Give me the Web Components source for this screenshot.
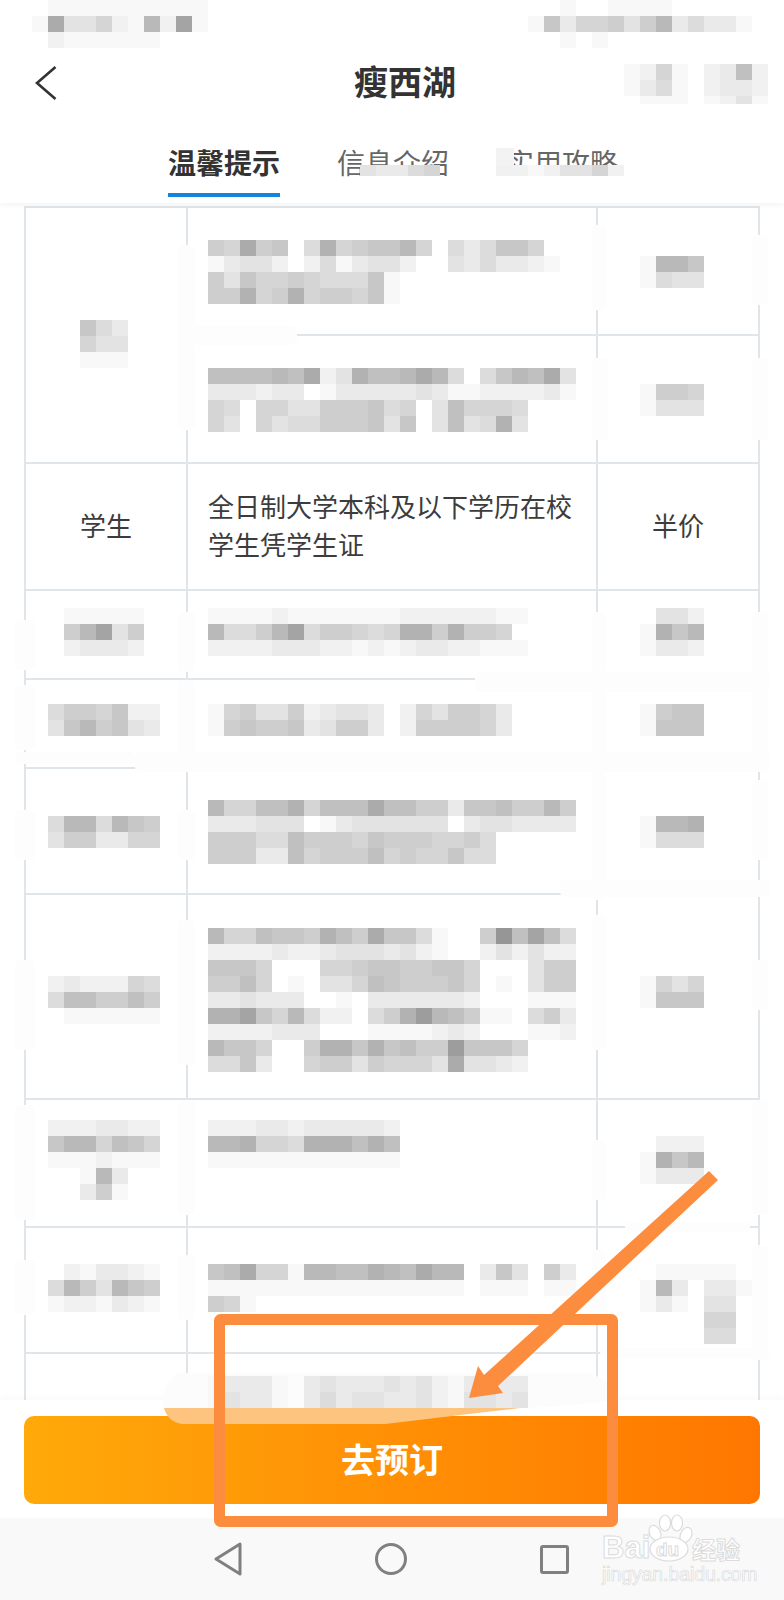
<!DOCTYPE html>
<html lang="zh">
<head>
<meta charset="utf-8">
<title>瘦西湖</title>
<style>
	html, body { margin: 0; background: #fff; }
	body { font-family: "Noto Sans CJK SC", "Noto Sans", sans-serif; color: #333; }
</style>
</head>
<body>
<phone-screen>
	<top-header>
		<pix-block slot="status" rows="
			.1111111111.
			1c44621a2d1
			.2111111...
		"></pix-block>
		<pix-block slot="status" rows="
			..1..1111.....
			18366747a35331
			..1.1.........
		"></pix-block>
		<span slot="title">瘦西湖</span>
		<pix-block slot="action" style="height:40px" rows="
			1261.2392
			1351.2332
			.111.1241
		"></pix-block>
		<tab-item slot="tabs" active>温馨提示</tab-item>
		<tab-item slot="tabs">信息介绍</tab-item>
		<tab-item slot="tabs">实用攻略</tab-item>
	</top-header>

	<fare-table>
		<fare-cell col="1" span style="--top:112px"><pix-block rows="..853 ..644 ..111"></pix-block></fare-cell>
		<fare-cell col="2" style="--top:32px"><pix-block rows="
			76c78.5b6788a6.535886
			13442.2513442..4353321
			748667655581
			77b67b677681
		"></pix-block></fare-cell>
		<fare-cell col="3" style="--top:48px"><pix-block rows="1aa8 1544"></pix-block></fare-cell>
		<fare-cell col="2" style="--top:32px"><pix-block rows="
			9999a9c24b99aca5.58a9c4
			333233.1333334311222231
			65.6644777856.496665
			64.6455777848.4945b4
		"></pix-block></fare-cell>
		<fare-cell col="3" style="--top:48px"><pix-block rows="1776 1444"></pix-block></fare-cell>

		<fare-cell text>学生</fare-cell>
		<fare-cell text col="2">全日制大学本科及以下学历在校学生凭学生证</fare-cell>
		<fare-cell text>半价</fare-cell>

		<fare-cell col="1" style="--top:17px"><pix-block rows=".11111 .7ad47 .23332"></pix-block></fare-cell>
		<fare-cell col="2" style="--top:17px"><pix-block rows="
			11112111111122222211
			a557ad577656bb7b776
			22223332212123322111
		"></pix-block></fare-cell>
		<fare-cell col="3" style="--top:17px"><pix-block rows=".442 1b8a 1332"></pix-block></fare-cell>

		<fare-cell col="1" style="--top:24px"><pix-block rows="5776822 48a7843"></pix-block></fare-cell>
		<fare-cell col="2" style="--top:24px"><pix-block rows="
			16744723443.2647763
			17877834773.2777763
		"></pix-block></fare-cell>
		<fare-cell col="3" style="--top:24px"><pix-block rows="1788 1888"></pix-block></fare-cell>

		<fare-cell col="1" style="--top:47px"><pix-block rows="5aa5a87 4773366"></pix-block></fare-cell>
		<fare-cell col="2" style="--top:31px"><pix-block rows="
			a6699b6999c9977388977a7
			333444.13444444.3443333
			777559777687776675
			777339677796766855
		"></pix-block></fare-cell>
		<fare-cell col="3" style="--top:47px"><pix-block rows="1aab 1555"></pix-block></fare-cell>

		<fare-cell col="1" style="--top:81px"><pix-block rows="2322265 5997797 .111111"></pix-block></fare-cell>
		<fare-cell col="2" style="--top:33px"><pix-block rows="
			a669887b97c8851..7f9d95
			222232234443421..242422
			8886...6678877886...477
			7796.1.4469877786.1.477
			334333..1.3333332...111
			bbd86a522.57bea9711.573
			2222333...1111232...112
			a886..7bb8b8977e8886
			5583..677476664c4432
		"></pix-block></fare-cell>
		<fare-cell col="3" style="--top:81px"><pix-block rows="1646 1888"></pix-block></fare-cell>

		<fare-cell col="1" style="--top:20px"><pix-block rows="2223322 8aa6986 1112111 ..1a3 ..371"></pix-block></fare-cell>
		<fare-cell col="2" style="--top:20px"><pix-block rows="
			222332333332
			aab665bbb9b9
			111111111111
		"></pix-block></fare-cell>
		<fare-cell col="3" style="--top:36px"><pix-block rows=".222 1b8a 1333"></pix-block></fare-cell>

		<fare-cell col="1" style="--top:36px"><pix-block rows=".213321 5a74a87 1221321"></pix-block></fare-cell>
		<fare-cell col="2" style="--top:36px"><pix-block rows="
			89c661aa99ba9caa.384.73
			1111111111111111.111.11
			761
		"></pix-block></fare-cell>
		<fare-cell col="3" style="--top:36px"><pix-block rows=".11111 1a3.331 131.44 ....66 ....55"></pix-block></fare-cell>

		<fare-cell col="1"></fare-cell>
		<fare-cell col="2"></fare-cell>
		<fare-cell col="3"></fare-cell>
	</fare-table>

	<book-bar>去预订</book-bar>
	<nav-keys></nav-keys>
	<mark-layer></mark-layer>
</phone-screen>

<script>
	const tpl = html => {
		const t = document.createElement('template');
		t.innerHTML = html;
		return t;
	};

	const screenTpl = tpl(`
		<style>
			:host {
				display: flex;
				flex-direction: column;
				position: relative;
				width: 784px;
				height: 1600px;
				overflow: hidden;
				background: #fff;
			}
		</style>
		<slot></slot>
	`);

	customElements.define('phone-screen', class extends HTMLElement {
		constructor() {
			super();
			this.attachShadow({ mode: 'open' }).appendChild(screenTpl.content.cloneNode(true));
		}
	});

	//	mosaic squares, 16px each; one hex digit per square is how dark it is, '.' is nothing
	customElements.define('pix-block', class extends HTMLElement {
		constructor() {
			super();
			this.attachShadow({ mode: 'open' });
		}

		connectedCallback() {
			const rows = (this.getAttribute('rows') || '').trim().split(/\s+/);
			const width = Math.max(...rows.map(r => r.length));
			let cells = '';
			rows.forEach(r => {
				for (let i = 0; i < width; i++) {
					const c = r[i];
					if (!c || c === '.') {
						cells += '<i></i>';
					} else {
						const g = 255 - parseInt(c, 16) * 7;
						cells += `<i style="background:rgb(${g},${g},${g})"></i>`;
					}
				}
			});
			this.shadowRoot.innerHTML = `
				<style>
					:host { display: grid; grid-template-columns: repeat(${width}, 16px); grid-auto-rows: 16px; overflow: hidden; flex: none; }
					i { display: block; }
				</style>
				${cells}
			`;
		}
	});

	const headerTpl = tpl(`
		<style>
			:host {
				display: block;
				position: relative;
				z-index: 2;
				flex: none;
				height: 203px;
				background: #fff;
				box-shadow: 0 2px 6px rgba(0, 0, 0, .05);
			}
			.status {
				display: flex;
				justify-content: space-between;
				height: 48px;
				padding: 0 32px;
			}
			.title {
				display: flex;
				height: 68px;
				align-items: center;
				padding: 0 16px 0 35px;
			}
			.title svg { flex: none; margin-top: 2px; }
			.name {
				margin-left: 297px;
				font-size: 34px;
				font-weight: 700;
				line-height: 44px;
				margin-top: -3px;
				color: #333;
			}
			.action { margin-left: auto; padding-top: 16px; align-self: flex-start; }
			.tabs {
				display: flex;
				gap: 57px;
				margin-top: 24px;
				padding-left: 168px;
			}
		</style>
		<div class="status"><slot name="status"></slot></div>
		<div class="title">
			<svg width="22" height="34" viewBox="0 0 22 34"><path d="M20.5 1 L2 17 L20.5 33" fill="none" stroke="#333" stroke-width="2.6"/></svg>
			<div class="name"><slot name="title"></slot></div>
			<div class="action"><slot name="action"></slot></div>
		</div>
		<div class="tabs"><slot name="tabs"></slot></div>
	`);

	customElements.define('top-header', class extends HTMLElement {
		constructor() {
			super();
			this.attachShadow({ mode: 'open' }).appendChild(headerTpl.content.cloneNode(true));
		}
	});

	const tabTpl = tpl(`
		<style>
			:host {
				display: block;
				font-size: 28px;
				line-height: 44px;
				color: #666;
				padding-bottom: 9px;
				border-bottom: 4px solid transparent;
			}
			:host([active]) {
				font-weight: 700;
				color: #333;
				border-bottom-color: #1584dc;
			}
		</style>
		<slot></slot>
	`);

	customElements.define('tab-item', class extends HTMLElement {
		constructor() {
			super();
			this.attachShadow({ mode: 'open' }).appendChild(tabTpl.content.cloneNode(true));
		}
	});

	const tableTpl = tpl(`
		<style>
			:host {
				display: block;
				flex: 1;
				min-height: 0;
				overflow: hidden;
				padding: 3px 24px 0;
			}
			.grid {
				display: grid;
				grid-template-columns: 162px 410px 162px;
				grid-template-rows: 128px 128px 127px 89px 89px 126px 205px 128px 126px 128px;
				border-top: 2px solid #e0e5ea;
				border-left: 2px solid #e0e5ea;
			}
		</style>
		<div class="grid"><slot></slot></div>
	`);

	customElements.define('fare-table', class extends HTMLElement {
		constructor() {
			super();
			this.attachShadow({ mode: 'open' }).appendChild(tableTpl.content.cloneNode(true));
		}
	});

	const cellTpl = tpl(`
		<style>
			:host {
				display: flex;
				box-sizing: border-box;
				border-right: 2px solid #e0e5ea;
				border-bottom: 2px solid #e0e5ea;
				padding-top: var(--top, 0);
				min-width: 0;
			}
			:host([span]) { grid-row: span 2; }
			:host([col="1"]) { padding-left: 22px; }
			:host([col="2"]) { padding-left: 20px; }
			:host([col="3"]) { padding-left: 42px; }
			:host([text]) {
				align-items: center;
				justify-content: center;
				padding-bottom: 4px;
				font-size: 26px;
				line-height: 38px;
				color: #3c3c3c;
			}
			:host([text][col="2"]) {
				justify-content: flex-start;
				padding-right: 20px;
			}
		</style>
		<slot></slot>
	`);

	customElements.define('fare-cell', class extends HTMLElement {
		constructor() {
			super();
			this.attachShadow({ mode: 'open' }).appendChild(cellTpl.content.cloneNode(true));
		}
	});

	const bookTpl = tpl(`
		<style>
			:host {
				display: block;
				flex: none;
				position: relative;
				z-index: 1;
				box-sizing: border-box;
				height: 118px;
				padding: 16px 24px 14px;
				background: #fff;
				box-shadow: 0 -3px 6px rgba(0, 0, 0, .025);
			}
			.btn {
				display: flex;
				align-items: center;
				justify-content: center;
				height: 88px;
				padding-bottom: 4px;
				box-sizing: border-box;
				border-radius: 10px;
				background: linear-gradient(90deg, #ffa90a, #ff7700);
				color: #fff;
				font-size: 34px;
				font-weight: 700;
			}
		</style>
		<div class="btn"><slot></slot></div>
	`);

	customElements.define('book-bar', class extends HTMLElement {
		constructor() {
			super();
			this.attachShadow({ mode: 'open' }).appendChild(bookTpl.content.cloneNode(true));
		}
	});

	const navTpl = tpl(`
		<style>
			:host {
				display: flex;
				flex: none;
				position: relative;
				z-index: 1;
				align-items: center;
				gap: 133px;
				height: 82px;
				padding-left: 214px;
				background: #f9f9f9;
			}
			svg { display: block; fill: none; stroke: #808080; stroke-width: 3; stroke-linejoin: round; }
		</style>
		<svg width="28" height="34" viewBox="0 0 28 34"><path d="M26 2 V32 L2 17 Z"/></svg>
		<svg width="32" height="32" viewBox="0 0 32 32"><circle cx="16" cy="16" r="14.5"/></svg>
		<svg width="29" height="29" viewBox="0 0 29 29"><rect x="1.5" y="1.5" width="26" height="26" rx="1.5"/></svg>
	`);

	customElements.define('nav-keys', class extends HTMLElement {
		constructor() {
			super();
			this.attachShadow({ mode: 'open' }).appendChild(navTpl.content.cloneNode(true));
		}
	});

	//	retouch patches that hide table lines: x, y, w, h
	const PATCHES = [
		[178, 245, 17, 185], [592, 225, 14, 85], [752, 235, 16, 70], [188, 325, 109, 20],
		[592, 358, 16, 82], [752, 358, 16, 82],
		[15, 620, 20, 50], [178, 612, 17, 60], [592, 612, 14, 60], [752, 612, 16, 60],
		[475, 672, 295, 20], [15, 685, 20, 65], [178, 680, 17, 90], [592, 680, 14, 90], [752, 680, 16, 90],
		[135, 752, 635, 20], [15, 752, 120, 12],
		[15, 810, 20, 50], [178, 810, 17, 50], [592, 772, 14, 128], [752, 780, 16, 80], [560, 880, 210, 17],
		[15, 960, 20, 90], [178, 920, 17, 145], [592, 915, 14, 135], [752, 960, 16, 50],
		[15, 1105, 20, 115], [178, 1100, 17, 115], [592, 1140, 14, 60], [752, 1100, 16, 115], [625, 1222, 125, 10],
		[15, 1260, 20, 55], [178, 1255, 17, 65], [592, 1250, 14, 70], [752, 1245, 16, 115], [600, 1348, 170, 10]
	];

	const markTpl = tpl(`
		<style>
			:host {
				position: absolute;
				left: 0;
				top: 0;
				width: 784px;
				height: 1600px;
				z-index: 3;
				pointer-events: none;
			}
			svg { position: absolute; left: 0; top: 0; }
			pix-block { position: absolute; }
			.mark { position: absolute; left: 600px; top: 1514px; width: 146px; height: 70px; }
			.mark span {
				position: absolute;
				font-family: "Liberation Sans", sans-serif;
				color: #fff;
				-webkit-text-stroke: 1px #dcdcdc;
				white-space: nowrap;
			}
			.bai { left: 2px; top: 20px; font-size: 31px; font-weight: 700; line-height: 28px; }
			.du { left: 56px; top: 26px; font-size: 19px; line-height: 20px; font-weight: 700; }
			.jy { left: 92px; top: 22px; font-size: 24px; line-height: 26px; font-weight: 700; font-family: "Noto Sans CJK SC", sans-serif !important; }
			.url { left: 2px; top: 50px; font-size: 19.5px; line-height: 20px; letter-spacing: -.1px; -webkit-text-stroke-width: .7px !important; }
		</style>
		<svg class="patches" width="784" height="1600" viewBox="0 0 784 1600"></svg>
		<svg width="784" height="1600" viewBox="0 0 784 1600">
			<path d="M350 176 H630 Q626 186 560 188 Q470 200 400 194 Q366 188 350 176 Z" fill="#fff"/>
			<rect x="448" y="150" width="48" height="30" fill="#fff"/>
			<rect x="496" y="148" width="18" height="17" fill="#f3f3f3"/>
			<path d="M178 1373 H590 Q640 1396 600 1402 Q540 1408 500 1410 H164 Q160 1385 178 1373 Z" fill="#fcfcfc"/>
			<path d="M164 1408 H520 Q450 1416 385 1424 H182 Q168 1422 164 1408 Z" fill="#fcc47e"/>
		</svg>
		<pix-block style="left:360px;top:165px;height:11px" rows="43356"></pix-block>
		<pix-block style="left:496px;top:165px;height:11px" rows="22124462"></pix-block>
		<pix-block style="left:208px;top:1376px" rows="
			13331.34333434213333
			14331.35344334214434
		"></pix-block>
		<svg width="784" height="1600" viewBox="0 0 784 1600">
			<rect x="219.5" y="1319.5" width="393" height="202" rx="1" fill="none" stroke="#fd8d3e" stroke-width="11"/>
			<path d="M709 1171 L718 1180 L498 1386 L503 1393 L469 1398 L478 1366 L484 1375 Z" fill="#fd8d3e"/>
		</svg>
		<div class="mark">
			<svg width="146" height="50" viewBox="0 0 146 50" fill="#fff" stroke="#dcdcdc" stroke-width="1.2">
				<ellipse cx="55" cy="19" rx="5.5" ry="8" transform="rotate(-25 55 19)"/>
				<ellipse cx="65" cy="9" rx="5.5" ry="8"/>
				<ellipse cx="77" cy="9" rx="5.5" ry="8"/>
				<ellipse cx="86" cy="21" rx="5.5" ry="8" transform="rotate(25 86 21)"/>
				<ellipse cx="69" cy="35" rx="19" ry="12"/>
			</svg>
			<span class="bai">Bai</span>
			<span class="du">du</span>
			<span class="jy">经验</span>
			<span class="url">jingyan.baidu.com</span>
		</div>
	`);

	customElements.define('mark-layer', class extends HTMLElement {
		constructor() {
			super();
			const s = this.attachShadow({ mode: 'open' });
			s.appendChild(markTpl.content.cloneNode(true));
			s.querySelector('.patches').innerHTML = PATCHES
				.map(p => `<rect x="${p[0]}" y="${p[1]}" width="${p[2]}" height="${p[3]}" rx="5" fill="#fdfdfe"/>`)
				.join('');
		}
	});
</script>
</body>
</html>
